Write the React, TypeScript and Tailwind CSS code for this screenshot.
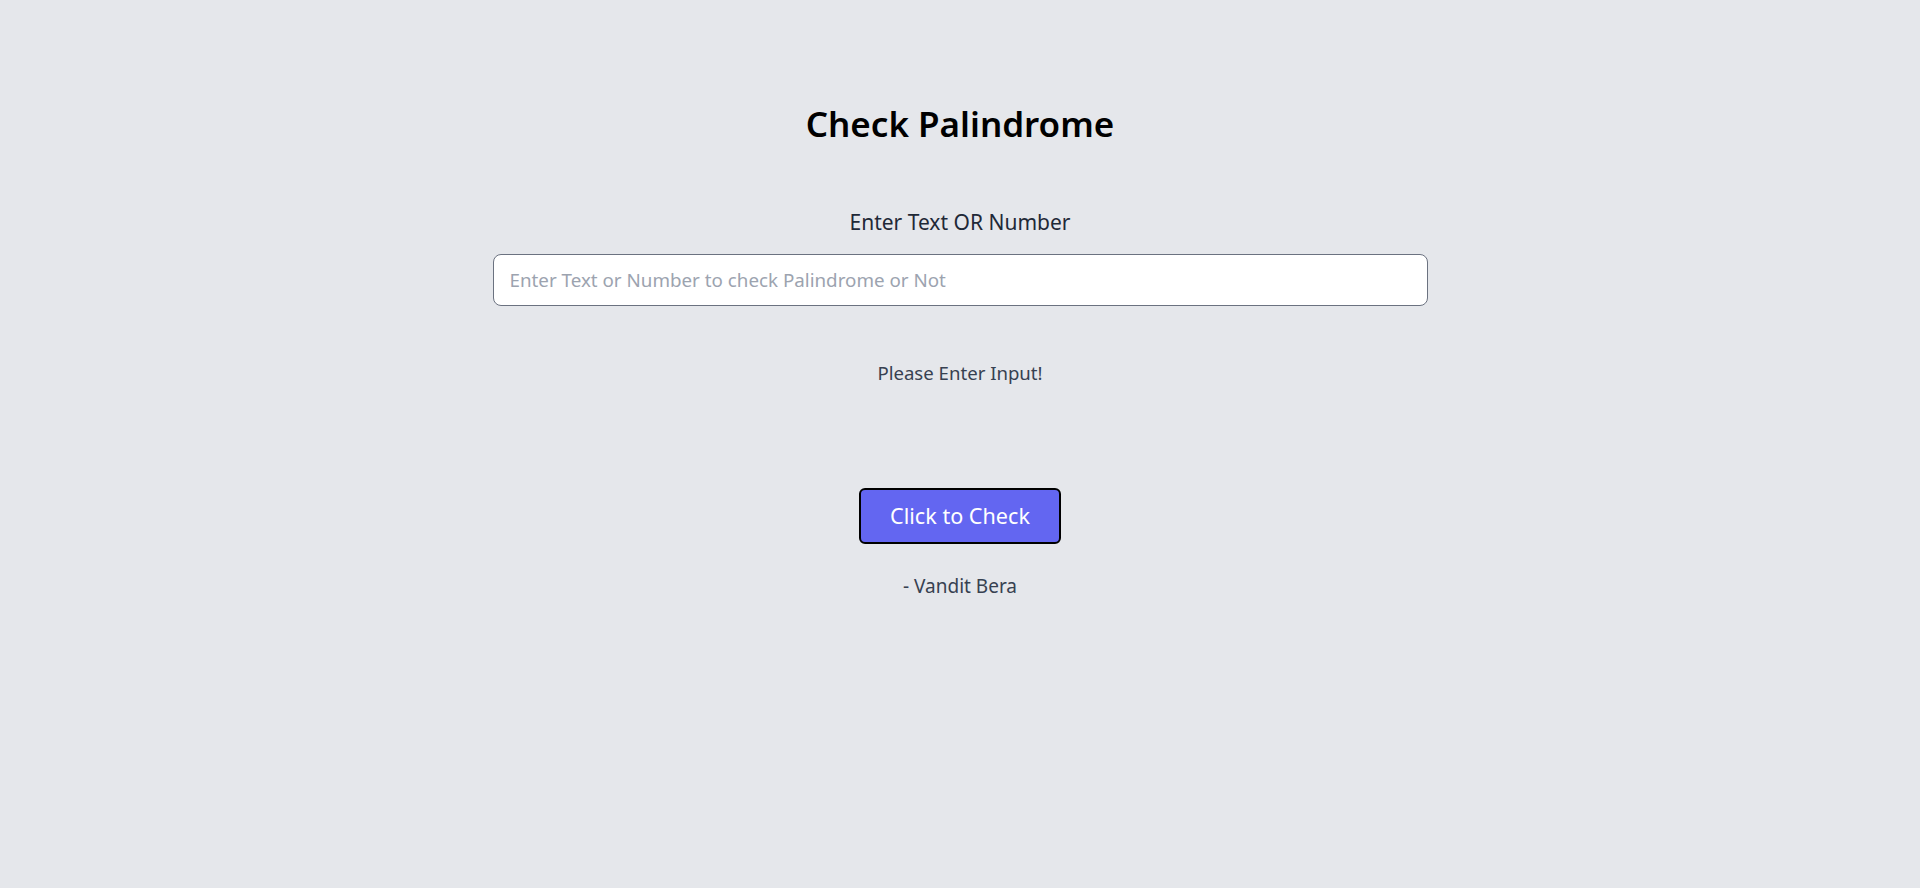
import React from "react";

export default function App() {
  return (
    <div className="min-h-screen w-full bg-[#e5e7eb] font-['Noto_Sans',sans-serif] flex flex-col items-center pt-[104px]">
      <h1 className="text-[35px] leading-[40px] font-semibold text-black">Check Palindrome</h1>
      <label className="mt-16 text-[21px] leading-7 text-[#1f2937]">Enter Text OR Number</label>
      <input
        type="text"
        placeholder="Enter Text or Number to check Palindrome or Not"
        className="mt-[18px] w-[935px] h-[52px] bg-white border border-[#6b7280] rounded-lg px-4 text-[18.8px] text-[#111827] placeholder:text-[#9ca3af] outline-none"
      />
      <p className="mt-[53px] text-[18.6px] leading-7 text-[#374151]">Please Enter Input!</p>
      <button className="mt-[101px] w-[202px] h-[56px] bg-[#6366f1] border-2 border-black rounded-md text-[21.6px] leading-7 text-white">
        Click to Check
      </button>
      <p className="mt-7 text-[19px] leading-7 text-[#374151]">- Vandit Bera</p>
    </div>
  );
}
